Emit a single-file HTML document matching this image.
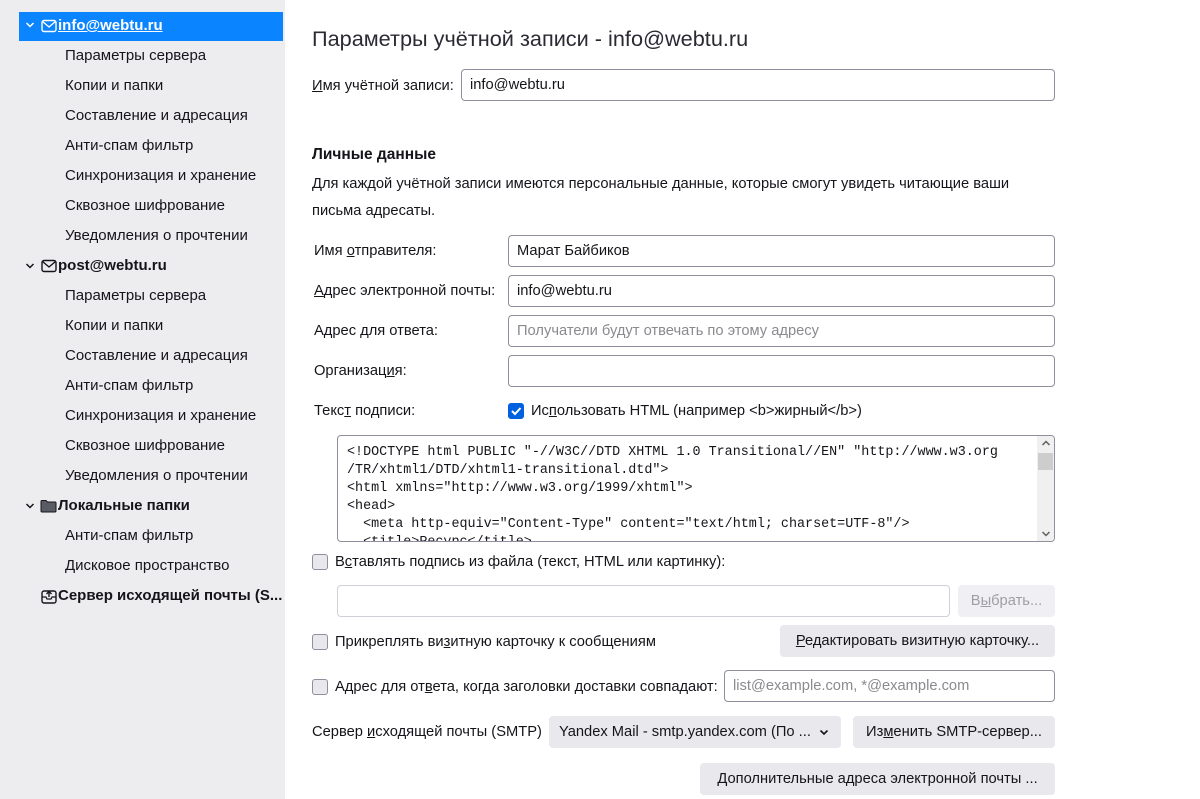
<!DOCTYPE html>
<html><head><meta charset="utf-8">
<style>
*{box-sizing:border-box;margin:0;padding:0}
body{width:1200px;height:799px;overflow:hidden;background:#fff;font-family:"Liberation Sans","DejaVu Sans",sans-serif;font-size:14.7px;color:#15141a;position:relative}
.t{position:absolute;white-space:nowrap;line-height:20px}
#side{position:absolute;left:0;top:0;width:285px;height:799px;background:#ededf0;font-size:15px}
.sel{position:absolute;left:19px;top:12px;width:264px;height:29px;background:#0a84ff}
.inp{position:absolute;height:32px;border:1px solid #8f8f9d;border-radius:4px;background:#fff;padding:0 8px;line-height:30px;white-space:nowrap}
.ph{color:#8a8a8f}
.btn{position:absolute;height:32px;background:#e9e9ed;border-radius:4px;line-height:32px;text-align:center;white-space:nowrap}
.cb{position:absolute;width:16px;height:16px;border:1px solid #8f8f9d;border-radius:3px;background:#e9e9ed}
u{text-decoration:underline}
.mono{font-family:"Liberation Mono","DejaVu Sans Mono",monospace;font-size:13.4px;line-height:18px;white-space:pre;position:absolute}
</style></head><body>
<div id="side">
<div class="sel"></div>
<svg style="position:absolute;left:25px;top:21px" width="10" height="8" viewBox="0 0 10 8"><path d="M1.5 2 L5 5.5 L8.5 2" fill="none" stroke="#fff" stroke-width="1.5"/></svg>
<svg style="position:absolute;left:41px;top:19px" width="16" height="14" viewBox="0 0 16 14"><rect x="1" y="1.5" width="14" height="11" rx="2" fill="none" stroke="#fff" stroke-width="1.4"/><path d="M1.5 2.5 L8 8 L14.5 2.5" fill="none" stroke="#fff" stroke-width="1.4"/></svg>
<div class="t" style="left:58px;top:16px;color:#fff;font-weight:bold;text-decoration:underline">info@webtu.ru</div>
<div class="t" style="left:65px;top:46px">Параметры сервера</div>
<div class="t" style="left:65px;top:76px">Копии и папки</div>
<div class="t" style="left:65px;top:106px">Составление и адресация</div>
<div class="t" style="left:65px;top:136px">Анти-спам фильтр</div>
<div class="t" style="left:65px;top:166px">Синхронизация и хранение</div>
<div class="t" style="left:65px;top:196px">Сквозное шифрование</div>
<div class="t" style="left:65px;top:226px">Уведомления о прочтении</div>
<svg style="position:absolute;left:25px;top:262px" width="10" height="8" viewBox="0 0 10 8"><path d="M1.5 2 L5 5.5 L8.5 2" fill="none" stroke="#15141a" stroke-width="1.5"/></svg>
<svg style="position:absolute;left:41px;top:259px" width="16" height="14" viewBox="0 0 16 14"><rect x="1" y="1.5" width="14" height="11" rx="2" fill="none" stroke="#15141a" stroke-width="1.4"/><path d="M1.5 2.5 L8 8 L14.5 2.5" fill="none" stroke="#15141a" stroke-width="1.4"/></svg>
<div class="t" style="left:58px;top:256px;font-weight:bold">post@webtu.ru</div>
<div class="t" style="left:65px;top:286px">Параметры сервера</div>
<div class="t" style="left:65px;top:316px">Копии и папки</div>
<div class="t" style="left:65px;top:346px">Составление и адресация</div>
<div class="t" style="left:65px;top:376px">Анти-спам фильтр</div>
<div class="t" style="left:65px;top:406px">Синхронизация и хранение</div>
<div class="t" style="left:65px;top:436px">Сквозное шифрование</div>
<div class="t" style="left:65px;top:466px">Уведомления о прочтении</div>
<svg style="position:absolute;left:25px;top:502px" width="10" height="8" viewBox="0 0 10 8"><path d="M1.5 2 L5 5.5 L8.5 2" fill="none" stroke="#15141a" stroke-width="1.5"/></svg>
<svg style="position:absolute;left:40px;top:499px" width="17" height="14" viewBox="0 0 17 14"><path d="M1 2.5 Q1 1.5 2 1.5 H6 L7.5 3 H15 Q16 3 16 4 V12 Q16 13 15 13 H2 Q1 13 1 12 Z" fill="#5b5b66" stroke="#15141a" stroke-width="1"/><rect x="2" y="5" width="13" height="7" fill="#5b5b66"/></svg>
<div class="t" style="left:58px;top:496px;font-weight:bold">Локальные папки</div>
<div class="t" style="left:65px;top:526px">Анти-спам фильтр</div>
<div class="t" style="left:65px;top:556px">Дисковое пространство</div>
<svg style="position:absolute;left:41px;top:589px" width="16" height="15" viewBox="0 0 16 15"><rect x="1" y="2" width="14" height="12" rx="2" fill="none" stroke="#15141a" stroke-width="1.4"/><path d="M1 8 H5 L6 10 H10 L11 8 H15" fill="none" stroke="#15141a" stroke-width="1.2"/><path d="M8 8 V2.5 M5.5 5 L8 2.5 L10.5 5" fill="none" stroke="#15141a" stroke-width="1.4"/></svg>
<div class="t" style="left:58px;top:586px;font-weight:bold">Сервер исходящей почты (S...</div>
</div>

<div class="t" style="left:312px;top:26px;font-size:21.7px;line-height:26px;color:#2b2a33;font-weight:300">Параметры учётной записи - info@webtu.ru</div>
<div class="t" style="left:312px;top:76px"><u>И</u>мя учётной записи:</div>
<div class="inp" style="left:461px;top:69px;width:594px">info@webtu.ru</div>

<div class="t" style="left:312px;top:145px;font-weight:bold;font-size:15.5px">Личные данные</div>
<div class="t" style="left:312px;top:174px">Для каждой учётной записи имеются персональные данные, которые смогут увидеть читающие ваши</div>
<div class="t" style="left:312px;top:201px">письма адресаты.</div>

<div class="t" style="left:314px;top:241px">Имя <u>о</u>тправителя:</div>
<div class="inp" style="left:508px;top:235px;width:547px">Марат Байбиков</div>
<div class="t" style="left:314px;top:281px"><u>А</u>дрес электронной почты:</div>
<div class="inp" style="left:508px;top:275px;width:547px">info@webtu.ru</div>
<div class="t" style="left:314px;top:321px">Адрес для ответа:</div>
<div class="inp" style="left:508px;top:315px;width:547px"><span class="ph">Получатели будут отвечать по этому адресу</span></div>
<div class="t" style="left:314px;top:361px">Организац<u>и</u>я:</div>
<div class="inp" style="left:508px;top:355px;width:547px"></div>

<div class="t" style="left:314px;top:401px">Текс<u>т</u> подписи:</div>
<div class="cb" style="left:508px;top:403px;background:#0061e0;border-color:#0061e0"><svg width="14" height="14" viewBox="0 0 14 14" style="position:absolute;left:0;top:0"><path d="M3 7 L6 10 L11.5 4" fill="none" stroke="#fff" stroke-width="2"/></svg></div>
<div class="t" style="left:531px;top:401px">Ис<u>п</u>ользовать HTML (например &lt;b&gt;жирный&lt;/b&gt;)</div>

<div style="position:absolute;left:337px;top:435px;width:718px;height:107px;border:1px solid #8f8f9d;border-radius:4px;overflow:hidden;background:#fff">
<div class="mono" style="left:9px;top:8px">&lt;!DOCTYPE html PUBLIC "-//W3C//DTD XHTML 1.0 Transitional//EN" "http://www.w3.org
/TR/xhtml1/DTD/xhtml1-transitional.dtd"&gt;
&lt;html xmlns="http://www.w3.org/1999/xhtml"&gt;
&lt;head&gt;
  &lt;meta http-equiv="Content-Type" content="text/html; charset=UTF-8"/&gt;
  &lt;title&gt;Ресурс&lt;/title&gt;</div>
<div style="position:absolute;right:0;top:0;width:17px;height:105px;background:#f0f0f0"></div>
<div style="position:absolute;right:1px;top:17px;width:15px;height:17px;background:#cdcdcd"></div>
<svg style="position:absolute;right:3px;top:4px" width="10" height="7" viewBox="0 0 10 7"><path d="M1.5 5 L5 1.5 L8.5 5" fill="none" stroke="#606060" stroke-width="1.5"/></svg>
<svg style="position:absolute;right:3px;bottom:4px" width="10" height="7" viewBox="0 0 10 7"><path d="M1.5 2 L5 5.5 L8.5 2" fill="none" stroke="#606060" stroke-width="1.5"/></svg>
</div>

<div class="cb" style="left:312px;top:554px"></div>
<div class="t" style="left:335px;top:552px">В<u>с</u>тавлять подпись из файла (текст, HTML или картинку):</div>
<div class="inp" style="left:337px;top:585px;width:613px;border-color:#cfcfd8"></div>
<div class="btn" style="left:958px;top:585px;width:97px;background:#f0f0f4;color:#9e9ea6">В<u>ы</u>брать...</div>

<div class="cb" style="left:312px;top:634px"></div>
<div class="t" style="left:335px;top:632px">Прикреплять ви<u>з</u>итную карточку к сообщениям</div>
<div class="btn" style="left:780px;top:625px;width:275px"><u>Р</u>едактировать визитную карточку...</div>

<div class="cb" style="left:312px;top:679px"></div>
<div class="t" style="left:335px;top:677px">Адрес для от<u>в</u>ета, когда заголовки доставки совпадают:</div>
<div class="inp" style="left:724px;top:670px;width:331px"><span class="ph">list@example.com, *@example.com</span></div>

<div class="t" style="left:312px;top:722px">Сервер <u>и</u>сходящей почты (SMTP)</div>
<div class="btn" style="left:549px;top:716px;width:292px;text-align:left;padding-left:10px">Yandex Mail - smtp.yandex.com (По ...<svg style="position:absolute;right:12px;top:13px" width="10" height="7" viewBox="0 0 10 7"><path d="M1.5 1.5 L5 5 L8.5 1.5" fill="none" stroke="#15141a" stroke-width="1.6"/></svg></div>
<div class="btn" style="left:853px;top:716px;width:202px">Из<u>м</u>енить SMTP-сервер...</div>

<div class="btn" style="left:700px;top:763px;width:355px"><u>Д</u>ополнительные адреса электронной почты ...</div>
</body></html>
